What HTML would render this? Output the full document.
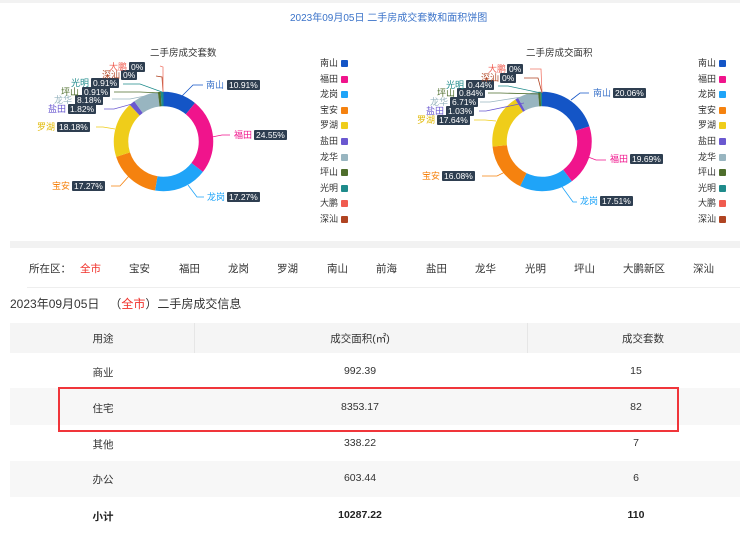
<!DOCTYPE html>
<html><head><meta charset="utf-8"><style>
*{margin:0;padding:0;box-sizing:border-box}
body{width:740px;height:537px;background:#fff;position:relative;overflow:hidden;font-family:"Liberation Sans","Noto Sans CJK SC",sans-serif;color:#333}
.a{position:absolute;white-space:nowrap}
.t{font-size:9px;line-height:10px}
.b{background:#2e3e50;color:#fff;font-size:8.5px;line-height:10px;padding:0 2px;border-radius:1px}
.lg{font-size:9px;color:#333;line-height:10px}
.sw{position:absolute;width:7px;height:7px;border-radius:1px}
.tab{position:absolute;top:261px;font-size:10.5px;color:#333}
.row{position:absolute;left:10px;width:730px;font-size:10.5px}
.row span{position:absolute;transform:translateX(-50%)}
</style></head><body>
<div class="a" style="left:0;top:0;width:740px;height:3px;background:#f2f2f2"></div>
<div class="a" style="left:290px;top:9px;font-size:10px;color:#3b73c9">2023年09月05日 二手房成交套数和面积饼图</div>
<div class="a" style="left:150px;top:45px;font-size:9.5px;color:#333">二手房成交套数</div>
<div class="a" style="left:526px;top:45px;font-size:9.5px;color:#333">二手房成交面积</div>

<svg class="a" style="left:0;top:0" width="740" height="240">
<g transform="translate(163.5,141.5) rotate(-90)" fill="none" stroke-width="14.5">
<circle r="42.5" pathLength="100" stroke="#1455c6" stroke-dasharray="10.91 100" stroke-dashoffset="0"/>
<circle r="42.5" pathLength="100" stroke="#f0148c" stroke-dasharray="24.55 100" stroke-dashoffset="-10.91"/>
<circle r="42.5" pathLength="100" stroke="#1fa4f8" stroke-dasharray="17.27 100" stroke-dashoffset="-35.46"/>
<circle r="42.5" pathLength="100" stroke="#f5820f" stroke-dasharray="17.27 100" stroke-dashoffset="-52.73"/>
<circle r="42.5" pathLength="100" stroke="#efcd1a" stroke-dasharray="18.18 100" stroke-dashoffset="-70"/>
<circle r="42.5" pathLength="100" stroke="#6a58d0" stroke-dasharray="1.82 100" stroke-dashoffset="-88.18"/>
<circle r="42.5" pathLength="100" stroke="#98b5c0" stroke-dasharray="8.18 100" stroke-dashoffset="-90"/>
<circle r="42.5" pathLength="100" stroke="#4e6e2c" stroke-dasharray="0.91 100" stroke-dashoffset="-98.18"/>
<circle r="42.5" pathLength="100" stroke="#1e8b8b" stroke-dasharray="0.91 100" stroke-dashoffset="-99.09"/>
</g>
<g transform="translate(542,141.5) rotate(-90)" fill="none" stroke-width="14.5">
<circle r="42.5" pathLength="100" stroke="#1455c6" stroke-dasharray="20.06 100" stroke-dashoffset="0"/>
<circle r="42.5" pathLength="100" stroke="#f0148c" stroke-dasharray="19.69 100" stroke-dashoffset="-20.06"/>
<circle r="42.5" pathLength="100" stroke="#1fa4f8" stroke-dasharray="17.51 100" stroke-dashoffset="-39.75"/>
<circle r="42.5" pathLength="100" stroke="#f5820f" stroke-dasharray="16.08 100" stroke-dashoffset="-57.26"/>
<circle r="42.5" pathLength="100" stroke="#efcd1a" stroke-dasharray="17.64 100" stroke-dashoffset="-73.34"/>
<circle r="42.5" pathLength="100" stroke="#6a58d0" stroke-dasharray="1.03 100" stroke-dashoffset="-90.98"/>
<circle r="42.5" pathLength="100" stroke="#98b5c0" stroke-dasharray="6.71 100" stroke-dashoffset="-92.01"/>
<circle r="42.5" pathLength="100" stroke="#4e6e2c" stroke-dasharray="0.84 100" stroke-dashoffset="-98.72"/>
<circle r="42.5" pathLength="100" stroke="#1e8b8b" stroke-dasharray="0.44 100" stroke-dashoffset="-99.56"/>
</g>
<g fill="none" stroke-width="0.8">
<polyline points="182,96 193,85 203,85" stroke="#1455c6"/>
<polyline points="212,137 222,135 230,135" stroke="#f0148c"/>
<polyline points="188,185 197,197 204,197" stroke="#1fa4f8"/>
<polyline points="129,176 120,186 111,186" stroke="#f5820f"/>
<polyline points="115,129 103,127 96,127" stroke="#efcd1a"/>
<polyline points="132,104 114,109 104,109" stroke="#6a58d0"/>
<polyline points="150,95 130,99 112,99" stroke="#98b5c0"/>
<polyline points="161,93 140,92 114,92" stroke="#4e6e2c"/>
<polyline points="162,92 140,84 123,84" stroke="#1e8b8b"/>
<polyline points="163,92 162,77 156,76" stroke="#b04422"/>
<polyline points="163,92 163,67 160,66" stroke="#f0786a"/>
<polyline points="571,100 580,93 589,93" stroke="#1455c6"/>
<polyline points="583,155 596,160 606,160" stroke="#f0148c"/>
<polyline points="560,184 573,202 577,202" stroke="#1fa4f8"/>
<polyline points="509,170 497,176 482,176" stroke="#f5820f"/>
<polyline points="496,121 485,120 474,120" stroke="#efcd1a"/>
<polyline points="524,103 486,111 479,111" stroke="#6a58d0"/>
<polyline points="528,96 490,102 480,102" stroke="#98b5c0"/>
<polyline points="540,94 500,93 488,93" stroke="#4e6e2c"/>
<polyline points="541,93 508,86 498,86" stroke="#1e8b8b"/>
<polyline points="542,93 538,78 524,78" stroke="#b04422"/>
<polyline points="542,93 541,69 530,69" stroke="#f0786a"/>
</g>
</svg>

<!-- left labels -->
<div class="a t" style="left:206px;top:80px;color:#3b73c9">南山</div><div class="a b" style="left:227px;top:80px">10.91%</div>
<div class="a t" style="left:234px;top:130px;color:#f0148c">福田</div><div class="a b" style="left:254px;top:130px">24.55%</div>
<div class="a t" style="left:207px;top:192px;color:#1fa4f8">龙岗</div><div class="a b" style="left:227px;top:192px">17.27%</div>
<div class="a t" style="left:52px;top:181px;color:#f5820f">宝安</div><div class="a b" style="left:72px;top:181px">17.27%</div>
<div class="a t" style="left:37px;top:122px;color:#e0b800">罗湖</div><div class="a b" style="left:57px;top:122px">18.18%</div>
<div class="a t" style="left:48px;top:104px;color:#6a58d0">盐田</div><div class="a b" style="left:68px;top:104px">1.82%</div>
<div class="a t" style="left:54px;top:95px;color:#98b5c0">龙华</div><div class="a b" style="left:75px;top:95px">8.18%</div>
<div class="a t" style="left:61px;top:87px;color:#4e6e2c">坪山</div><div class="a b" style="left:82px;top:87px">0.91%</div>
<div class="a t" style="left:71px;top:78px;color:#1e8b8b">光明</div><div class="a b" style="left:91px;top:78px">0.91%</div>
<div class="a t" style="left:102px;top:70px;color:#b04422">深汕</div><div class="a b" style="left:121px;top:70px">0%</div>
<div class="a t" style="left:109px;top:62px;color:#f05b4f">大鹏</div><div class="a b" style="left:129px;top:62px">0%</div>
<!-- right labels -->
<div class="a t" style="left:593px;top:88px;color:#3b73c9">南山</div><div class="a b" style="left:613px;top:88px">20.06%</div>
<div class="a t" style="left:610px;top:154px;color:#f0148c">福田</div><div class="a b" style="left:630px;top:154px">19.69%</div>
<div class="a t" style="left:580px;top:196px;color:#1fa4f8">龙岗</div><div class="a b" style="left:600px;top:196px">17.51%</div>
<div class="a t" style="left:422px;top:171px;color:#f5820f">宝安</div><div class="a b" style="left:442px;top:171px">16.08%</div>
<div class="a t" style="left:417px;top:115px;color:#e0b800">罗湖</div><div class="a b" style="left:437px;top:115px">17.64%</div>
<div class="a t" style="left:426px;top:106px;color:#6a58d0">盐田</div><div class="a b" style="left:446px;top:106px">1.03%</div>
<div class="a t" style="left:430px;top:97px;color:#98b5c0">龙华</div><div class="a b" style="left:450px;top:97px">6.71%</div>
<div class="a t" style="left:437px;top:88px;color:#4e6e2c">坪山</div><div class="a b" style="left:457px;top:88px">0.84%</div>
<div class="a t" style="left:446px;top:80px;color:#1e8b8b">光明</div><div class="a b" style="left:466px;top:80px">0.44%</div>
<div class="a t" style="left:481px;top:73px;color:#b04422">深汕</div><div class="a b" style="left:500px;top:73px">0%</div>
<div class="a t" style="left:488px;top:64px;color:#f05b4f">大鹏</div><div class="a b" style="left:507px;top:64px">0%</div>

<!-- legends -->
<div class="a" style="left:320px;top:58px">
<div class="lg" style="position:absolute;top:0">南山</div><div class="sw" style="left:21px;top:2px;background:#1455c6"></div>
<div class="lg" style="position:absolute;top:15.6px">福田</div><div class="sw" style="left:21px;top:17.6px;background:#f0148c"></div>
<div class="lg" style="position:absolute;top:31.2px">龙岗</div><div class="sw" style="left:21px;top:33.2px;background:#1fa4f8"></div>
<div class="lg" style="position:absolute;top:46.8px">宝安</div><div class="sw" style="left:21px;top:48.8px;background:#f5820f"></div>
<div class="lg" style="position:absolute;top:62.4px">罗湖</div><div class="sw" style="left:21px;top:64.4px;background:#efcd1a"></div>
<div class="lg" style="position:absolute;top:78px">盐田</div><div class="sw" style="left:21px;top:80px;background:#6a58d0"></div>
<div class="lg" style="position:absolute;top:93.6px">龙华</div><div class="sw" style="left:21px;top:95.6px;background:#98b5c0"></div>
<div class="lg" style="position:absolute;top:109.2px">坪山</div><div class="sw" style="left:21px;top:111.2px;background:#4e6e2c"></div>
<div class="lg" style="position:absolute;top:124.8px">光明</div><div class="sw" style="left:21px;top:126.8px;background:#1e8b8b"></div>
<div class="lg" style="position:absolute;top:140.4px">大鹏</div><div class="sw" style="left:21px;top:142.4px;background:#f05b4f"></div>
<div class="lg" style="position:absolute;top:156px">深汕</div><div class="sw" style="left:21px;top:158px;background:#b04422"></div>
</div>
<div class="a" style="left:698px;top:58px">
<div class="lg" style="position:absolute;top:0">南山</div><div class="sw" style="left:21px;top:2px;background:#1455c6"></div>
<div class="lg" style="position:absolute;top:15.6px">福田</div><div class="sw" style="left:21px;top:17.6px;background:#f0148c"></div>
<div class="lg" style="position:absolute;top:31.2px">龙岗</div><div class="sw" style="left:21px;top:33.2px;background:#1fa4f8"></div>
<div class="lg" style="position:absolute;top:46.8px">宝安</div><div class="sw" style="left:21px;top:48.8px;background:#f5820f"></div>
<div class="lg" style="position:absolute;top:62.4px">罗湖</div><div class="sw" style="left:21px;top:64.4px;background:#efcd1a"></div>
<div class="lg" style="position:absolute;top:78px">盐田</div><div class="sw" style="left:21px;top:80px;background:#6a58d0"></div>
<div class="lg" style="position:absolute;top:93.6px">龙华</div><div class="sw" style="left:21px;top:95.6px;background:#98b5c0"></div>
<div class="lg" style="position:absolute;top:109.2px">坪山</div><div class="sw" style="left:21px;top:111.2px;background:#4e6e2c"></div>
<div class="lg" style="position:absolute;top:124.8px">光明</div><div class="sw" style="left:21px;top:126.8px;background:#1e8b8b"></div>
<div class="lg" style="position:absolute;top:140.4px">大鹏</div><div class="sw" style="left:21px;top:142.4px;background:#f05b4f"></div>
<div class="lg" style="position:absolute;top:156px">深汕</div><div class="sw" style="left:21px;top:158px;background:#b04422"></div>
</div>

<div class="a" style="left:10px;top:241px;width:730px;height:7px;background:#f2f2f2"></div>

<div class="tab" style="left:29px">所在区：</div>
<div class="tab" style="left:80px;color:#f0312b">全市</div>
<div class="tab" style="left:129px">宝安</div>
<div class="tab" style="left:179px">福田</div>
<div class="tab" style="left:228px">龙岗</div>
<div class="tab" style="left:277px">罗湖</div>
<div class="tab" style="left:327px">南山</div>
<div class="tab" style="left:376px">前海</div>
<div class="tab" style="left:426px">盐田</div>
<div class="tab" style="left:475px">龙华</div>
<div class="tab" style="left:525px">光明</div>
<div class="tab" style="left:574px">坪山</div>
<div class="tab" style="left:623px">大鹏新区</div>
<div class="tab" style="left:693px">深汕</div>
<div class="a" style="left:27px;top:287px;width:713px;height:1px;background:#eee"></div>

<div class="a" style="left:10px;top:295px;font-size:12px;color:#333">2023年09月05日 &nbsp;&nbsp;（<span style="color:#f0312b">全市</span>）二手房成交信息</div>

<div class="a" style="left:10px;top:323px;width:730px;height:30px;background:#f5f5f5"></div>
<div class="a" style="left:194px;top:323px;width:1px;height:30px;background:#e6e6e6"></div>
<div class="a" style="left:527px;top:323px;width:1px;height:30px;background:#e6e6e6"></div>
<div class="a" style="left:10px;top:388px;width:730px;height:37px;background:#f7f7f7"></div>
<div class="a" style="left:10px;top:461px;width:730px;height:36px;background:#f7f7f7"></div>

<div class="row" style="top:331px"><span style="left:93px">用途</span><span style="left:350px">成交面积(㎡)</span><span style="left:633px">成交套数</span></div>
<div class="row" style="top:365px"><span style="left:93px">商业</span><span style="left:350px">992.39</span><span style="left:626px">15</span></div>
<div class="row" style="top:401px"><span style="left:93px">住宅</span><span style="left:350px">8353.17</span><span style="left:626px">82</span></div>
<div class="row" style="top:437px"><span style="left:93px">其他</span><span style="left:350px">338.22</span><span style="left:626px">7</span></div>
<div class="row" style="top:472px"><span style="left:93px">办公</span><span style="left:350px">603.44</span><span style="left:626px">6</span></div>
<div class="row" style="top:509px;font-weight:bold;color:#222"><span style="left:93px">小计</span><span style="left:350px">10287.22</span><span style="left:626px">110</span></div>

<div class="a" style="left:58px;top:387px;width:621px;height:45px;border:2px solid #f0353a"></div>
</body></html>
